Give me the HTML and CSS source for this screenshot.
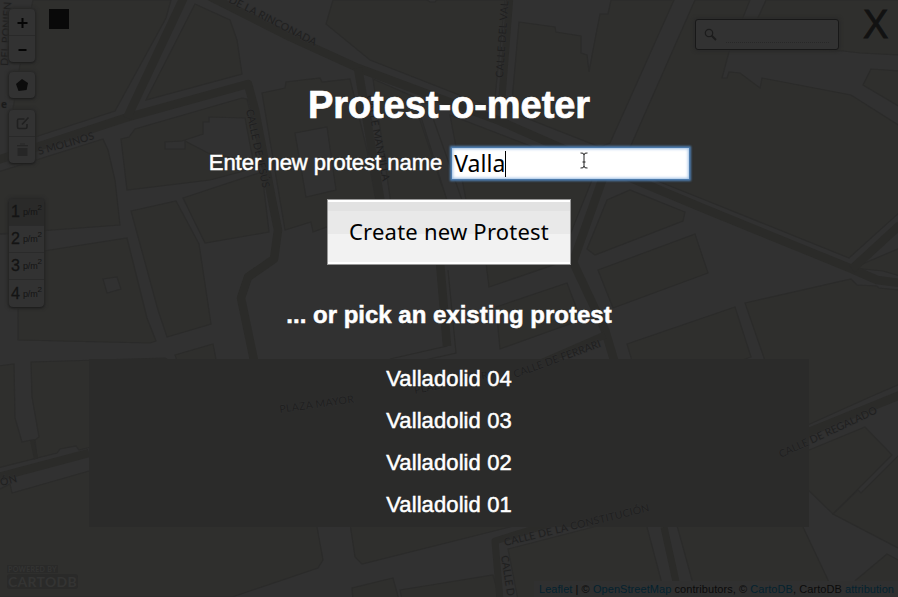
FILE: index.html
```html
<!DOCTYPE html>
<html lang="en">
<head>
<meta charset="utf-8">
<title>Protest-o-meter</title>
<link rel="stylesheet" href="styles.css">
</head>
<body>
<div class="app">
  <svg class="map" viewBox="0 0 898 597" aria-hidden="true">
    <g class="blocks">
      <path d="M33 0H171L166 18L115 111L38 136L14 145L12 115L20 65Z"/>
      <path d="M195 4L230 20L237 40L242 74L146 100Z"/>
      <path d="M121 139L129 137L135 129L242 98L247 99L263 165L240 172L210 180L127 190Z"/>
      <path d="M-2 172L103 139L108 150L115 180L120 225L-2 234Z"/>
      <path d="M18 255L127 238L135 270L147 318L156 341L150 343L18 340Z"/>
      <path d="M131 211L176 201L199 244L211 324L167 337L158 310Z"/>
      <path d="M183 198L262 172L269 232L205 243Z"/>
      <path d="M175 355L213 344L218 370H180Z"/>
      <path d="M-2 366L14 364L15 418L22 442L31 440L35 440L37 458L-2 468Z"/>
      <path d="M31 362L165 358L240 400L120 440L79 450L76 446L60 449L57 453L37 458L35 440L39 437L32 397Z"/>
      <path d="M-2 490L10 484L12 493L89 471L310 420L317 527L323 560L318 568L232 597H-2Z"/>
      <path d="M345 490L355 557L362 564L510 527L620 495L600 400L345 420Z"/>
      <path d="M353 600L352 588L393 578L399 600Z"/>
      <path d="M400 590L493 575L500 600H402Z"/>
      <path d="M508 549L640 515L647 527L661 580L665 600H518Z"/>
      <path d="M670 500L790 465L803 527L828 580L834 600H697L692 580Z"/>
      <path d="M780 462L865 427L892 455L833 514L804 486Z"/>
      <path d="M833 514L858 490L861 493L900 454V549Z"/>
      <path d="M840 597L856 580L887 554L900 561V600Z"/>
      <path d="M745 303L851 279L857 285L877 286L879 288L900 290V384L870 397L790 433Z"/>
      <path d="M627 344L735 307L751 357L642 395Z"/>
      <path d="M598 270L695 234L708 273L613 308Z"/>
      <path d="M496 307L567 283L581 320L500 349Z"/>
      <path d="M485 255L489 287L562 262L564 240Z"/>
      <path d="M587 249L607 200L630 190L685 212L683 221L595 255Z"/>
      <path d="M695 0H750L738 30L729 52L722 78L727 78L729 72L740 73L760 88L762 78L851 95L900 126V212L849 258L705 200L660 182L632 169L620 168L632 143Z"/>
      <path d="M766 0H900V55L860 53L843 51L750 48L748 40Z"/>
      <path d="M871 69L900 71V107L863 85Z"/>
      <path d="M519 22L555 27L556 32L581 36L581 53L587 55L589 72L593 50L600 14H608L611 0H674L610 143L600 147L511 112Z"/>
      <path d="M333 0H505L495 98L490 107L370 60L326 24Z"/>
      <path d="M262 93L285 88L286 82L320 78L322 82L350 79L367 150L380 225L330 230L327 227L313 232L311 222L285 230Z"/>
      <path d="M373 79L412 96L440 180L460 230L394 225Z"/>
      <path d="M450 115L585 167L594 175L570 235L485 255L466 200Z"/>
      <path d="M853 268L900 248V276L883 271Z"/>
    </g>
    <g class="streets">
      <path d="M209 117L245 118L253 160L235 158L208 153L185 141L185 149L165 149L165 142L182 141L203 134L203 122L209 122Z"/>
      <path d="M103 279L117 277L121 289L107 293Z"/>
      <path d="M295 133L327 127L336 190L306 197Z"/>
      <path d="M415 98L428 104L462 200L450 210Z"/>
      <path d="M424 -2L430 2L435 2L438 -2Z"/>
    </g>
    <g class="lines">
      <path d="M390 359L447 346L441 270M380 370L456 353L448 270M0 234H15M509 22L500 100"/>
    </g>
    <g class="roads">
      <path d="M-5 161L125 118L248 84L255 110L272 200L278 230L274 259L248 277L241 298L256 370"/>
      <path d="M185 -5L127 118"/>
      <path d="M197 -10L290 37L358 68L500 121L600 165L700 207L852 269L877 280L900 283"/>
      <path d="M852 269L900 225"/>
      <path d="M358 68L372 150L384 222L440 262L447 346"/>
      <path d="M604 175L573 262L605 330L617 370"/>
      <path class="thin" d="M510 -5L501 110M500 600L495 541L540 527L700 482M664 527L680 600"/>
      <path class="lane" d="M32 440L36 459"/>
      <path d="M-5 478L89 453"/>
      <path d="M780 445L809 432L900 395"/>
      <path class="thin" d="M605 335L520 372"/>
    </g>
  </svg>
  <svg class="map labels" viewBox="0 0 898 597" aria-hidden="true">
    <text transform="translate(228 2) rotate(27)" textLength="97">DE LA RINCONADA</text>
    <text transform="translate(246 110) rotate(78)" textLength="80">CALLE DE JESÚS</text>
    <text transform="translate(366 96) rotate(79)" textLength="87">CALLE MANTILLA</text>
    <text transform="translate(503 78) rotate(-86)" textLength="77">CALLE DEL VAL</text>
    <text transform="translate(8 66) rotate(-87)" textLength="64">DEL PONIEN</text>
    <text transform="translate(39 155) rotate(-16)" textLength="58">S MOLINOS</text>
    <text transform="translate(515 378) rotate(-20)" textLength="92">CALLE DE FERRARI</text>
    <text transform="translate(415 394) rotate(-12)" textLength="75">PLAZA MAYOR</text>
    <text transform="translate(280 413) rotate(-8)" textLength="75">PLAZA MAYOR</text>
    <text transform="translate(781 458) rotate(-25)" textLength="107">CALLE DE REGALADO</text>
    <text transform="translate(505 546) rotate(-13.500)" textLength="149">CALLE DE LA CONSTITUCIÓN</text>
    <text transform="translate(501 556) rotate(81)" textLength="41">CALLE D</text>
    <text transform="translate(1 486) rotate(-14)" textLength="17">ÓN</text>
    <text class="place" x="1" y="108">e</text>
  </svg>

  <div class="controls">
    <div class="bar zoom">
      <div class="tool"><svg viewBox="0 0 26 26"><path class="sign" d="M8.500 14H18.500M13.500 9V19"/></svg></div>
      <div class="tool"><svg viewBox="0 0 26 26"><path class="sign" d="M9.500 14H17.500"/></svg></div>
    </div>
    <div class="bar draw">
      <div class="tool"><svg viewBox="0 0 26 26"><path class="solid" d="M13 7L19 11L17.600 18L9.500 19L7 12Z"/></svg></div>
    </div>
    <div class="bar edit">
      <div class="tool"><svg viewBox="0 0 26 26"><path class="faint" d="M15.500 9H10Q8.500 9 8.500 10.500V17Q8.500 18.500 10 18.500H16.500Q18 18.500 18 17V14M13 14.500L19.500 7.500"/></svg></div>
      <div class="tool"><svg viewBox="0 0 26 26"><path class="bin" d="M8 8H19V9.300H8ZM11 6.500H16V7.500H11ZM8.500 11H18.500V19H8.500Z"/></svg></div>
    </div>
    <div class="bar density">
      <div class="level active"><b>1</b>p/m<sup>2</sup></div>
      <div class="level"><b>2</b>p/m<sup>2</sup></div>
      <div class="level"><b>3</b>p/m<sup>2</sup></div>
      <div class="level"><b>4</b>p/m<sup>2</sup></div>
    </div>
  </div>
  <div class="swatch"></div>
  <div class="search">
    <svg viewBox="0 0 14 14"><circle cx="5" cy="5" r="3.700"/><path class="handle" d="M7.500 7.500L12 12"/></svg>
    <span class="query"></span>
  </div>
  <div class="close">X</div>
  <div class="logo"><span class="powered">POWERED BY</span><span class="brand">CARTODB</span></div>
  <div class="attribution"><span><a>Leaflet</a> | © <a>OpenStreetMap</a> contributors, © <a>CartoDB</a>, CartoDB <a>attribution</a></span></div>

  <main class="dialog">
    <h1><span>Protest-o-meter</span></h1>
    <div class="field">
      <label>Enter new protest name</label>
      <div class="input">Valla<i class="caret"></i>
        <svg class="ibeam" viewBox="0 0 8 17"><path d="M.5 1Q4 .5 4 3Q4 .5 7.500 1M4 3V14M.5 16Q4 16.500 4 14Q4 16.500 7.500 16M2.500 10H5.500"/></svg>
      </div>
    </div>
    <div class="create"><span>Create new Protest</span></div>
    <h2>... or pick an existing protest</h2>
    <ul class="list">
      <li>Valladolid 04</li>
      <li>Valladolid 03</li>
      <li>Valladolid 02</li>
      <li>Valladolid 01</li>
    </ul>
  </main>
</div>
</body>
</html>
```
FILE: styles.css
```css
* { box-sizing: border-box; }
body { margin: 0; background: #313131; font-family: "Liberation Sans", Arial, sans-serif; }
.app { position: relative; width: 898px; height: 597px; overflow: hidden; }
.map { position: absolute; inset: 0; width: 898px; height: 597px; }
.blocks path { fill: #2f2f2d; stroke: #2b2b2a; stroke-width: 1.2; }
.streets path { fill: #313131; stroke: #2b2b2a; stroke-width: 1.2; }
.lines path { fill: none; stroke: #2b2b2a; stroke-width: 1.2; }
.roads path { fill: none; stroke: #2b2b29; stroke-width: 8.5; stroke-linejoin: round; }
.roads .thin { stroke-width: 7; }
.roads .lane { stroke-width: 4; }
.labels { z-index: 1; pointer-events: none; }
.labels text { font: 10.5px Lato, sans-serif; fill: #1f1f1f; stroke: #2f2f2f; stroke-width: 1px; paint-order: stroke; }
.labels .place { font: bold 10px "Open Sans", sans-serif; fill: #1b1b1b; }

.controls { position: absolute; z-index: 2; left: 9px; top: 9px; display: flex; flex-direction: column; align-items: flex-start; }
.bar { width: 26px; border-radius: 4px; background: #323232; box-shadow: 0 1px 2px 0 #1c1c1c, 0 0 3px 2px #2a2a29; overflow: hidden; }
.tool { height: 26px; }
.tool svg { display: block; width: 26px; height: 26px; }
.tool + .tool { border-top: 1px solid #292929; height: 27px; }
.draw { margin-top: 10px; }
.edit { margin-top: 12px; }
.density { width: 35px; margin-top: 36px; }
.sign { stroke: #050505; stroke-width: 2; }
.solid { fill: #0c0c0c; }
.faint { fill: none; stroke: #202020; stroke-width: 1.6; }
.bin { fill: #262626; }
.level { display: flex; align-items: center; height: 27px; padding-left: 2px; border-bottom: 1px solid #2a2a2a; color: #141414; font-size: 9px; letter-spacing: -.1px; line-height: 28px; white-space: nowrap; }
.level b { margin-right: 3px; font-size: 16px; font-weight: normal; letter-spacing: 0; -webkit-text-stroke: .3px #141414; }
.level sup { font-size: 8px; line-height: 8px; vertical-align: baseline; transform: translateY(-4px); }
.level:last-child { border-bottom: 0; }
.active { background: #2a2a29; }
.swatch { position: absolute; left: 49px; top: 9px; width: 20px; height: 20px; background: #090909; }

.search { position: absolute; left: 695px; top: 19px; display: flex; width: 144px; height: 31px; padding: 8px 9px 6px 8px; border: 1px solid #181818; border-radius: 3px; background: #323232; box-shadow: 0 0 3px 2px #2b2b2a; }
.search svg { width: 14px; height: 14px; fill: none; stroke: #1c1c1c; stroke-width: 1.2; }
.search .handle { stroke-width: 1.8; }
.query { flex: 1; margin-left: 8px; border-bottom: 1px dotted #282828; height: 15px; }
.close { position: absolute; left: 863px; top: 3px; color: #121212; font-size: 40px; line-height: 42px; -webkit-text-stroke: .9px #121212; transform: scaleX(.95); transform-origin: left; }
.logo { position: absolute; left: 7px; top: 565px; display: flex; flex-direction: column; align-items: flex-start; color: #343433; font-family: Lato, sans-serif; font-weight: bold; }
.powered { width: 51px; height: 8px; padding-left: 1px; background: #2a2a29; font-size: 7px; line-height: 8px; letter-spacing: .3px; }
.brand { width: 71px; height: 15px; margin-top: 1px; padding-left: 1px; border-radius: 3px; background: #2a2a29; font-size: 14px; line-height: 15px; letter-spacing: .3px; }
.attribution { position: absolute; right: 0; bottom: 0; height: 16px; padding: 0 4px 0 5px; background: #303030; color: #0b0b0b; font-size: 11px; line-height: 17px; letter-spacing: .065px; white-space: nowrap; }
.attribution a { color: #04222f; }

.dialog { position: relative; display: flex; flex-direction: column; align-items: center; padding: 83px 89px 0; color: #fff; }
h1, .field, .create, h2, .list li { position: relative; z-index: 2; }
h1 { margin: 0; height: 44px; font-size: 38px; line-height: 44px; letter-spacing: -.05px; -webkit-text-stroke: .7px #fff; white-space: nowrap; }
.field { display: flex; align-items: center; gap: 10px; margin-top: 20px; height: 32px; }
.field label { font-size: 22px; line-height: 34px; letter-spacing: 0; white-space: nowrap; -webkit-text-stroke: .5px #fff; }
.input { position: relative; width: 237px; height: 31px; padding-left: 2px; background: #fff; color: #000; font: 23px/31px "Noto Sans", "Open Sans", sans-serif; box-shadow: inset 0 0 3px 1px #9dbfe4, 0 0 2px 2px #4e7fb3; }
.caret { display: inline-block; width: 1px; height: 26px; background: #000; vertical-align: -5px; }
.ibeam { position: absolute; left: 128px; top: 4px; width: 8px; height: 17px; fill: none; stroke: #222; stroke-width: 1; }
.create { width: 244px; height: 66px; margin-top: 20px; border: 1px solid #979797; background: linear-gradient(#fff 0 2px, #e2e2e2 2px 11px, #e9e9e9 11px 34px, #f2f2f2 34px 62px, #fff 62px); color: #000; font: 22px/62px "Noto Sans", "Open Sans", sans-serif; letter-spacing: .22px; text-align: center; white-space: nowrap; }
h2 { margin: 35px 0 0; height: 30px; font-size: 24px; line-height: 30px; letter-spacing: 0; -webkit-text-stroke: .5px #fff; white-space: nowrap; }
.list { width: 720px; height: 168px; margin: 29px 0 0; padding: 0; list-style: none; background: #2b2b2a; text-align: center; }
.list li { height: 42px; font-size: 22px; line-height: 39px; letter-spacing: .1px; -webkit-text-stroke: .5px #fff; }
```
